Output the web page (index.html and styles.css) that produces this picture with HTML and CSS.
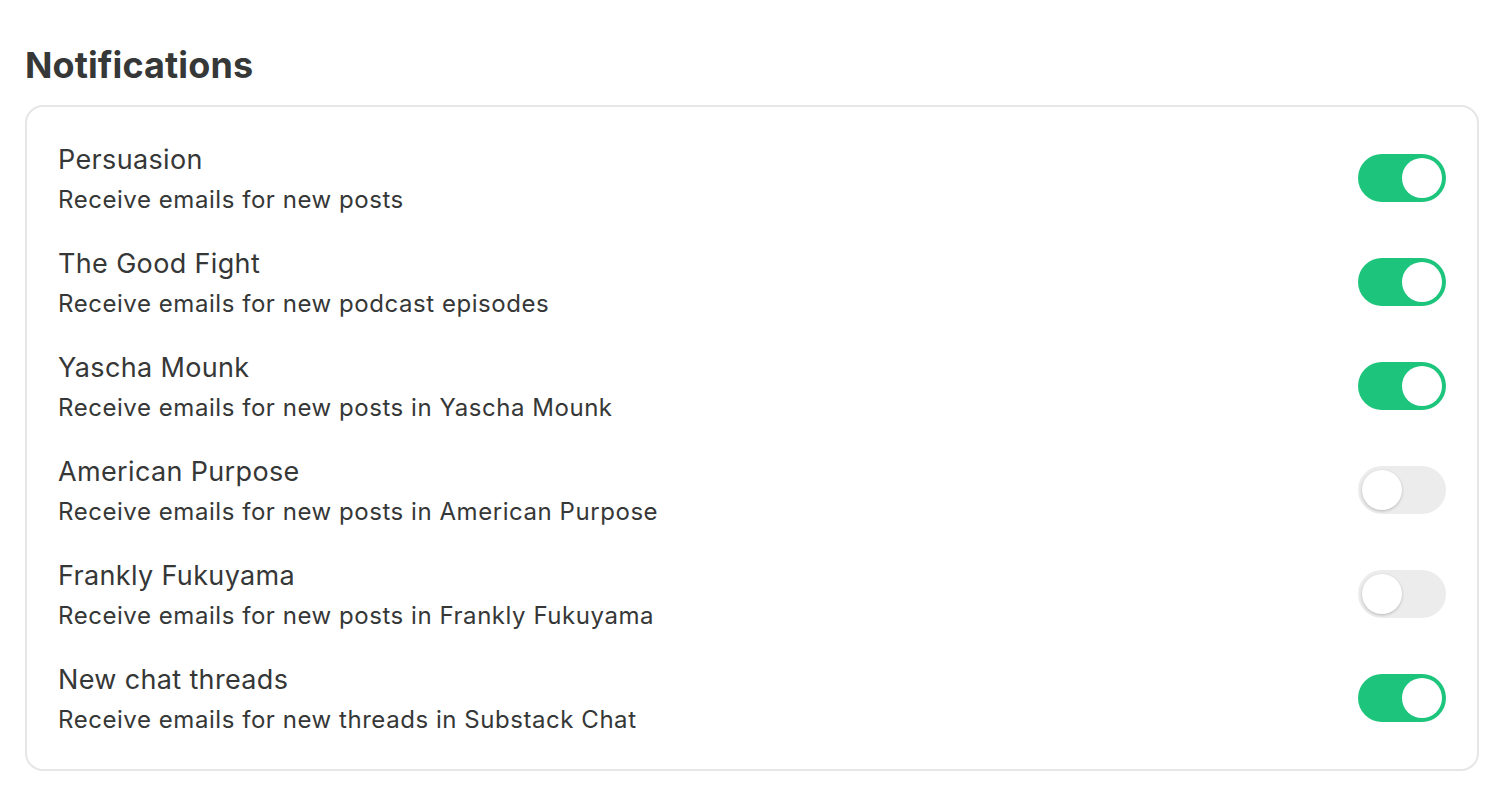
FILE: index.html
```html
<!DOCTYPE html>
<html>
<head>
<meta charset="utf-8">
<link rel="stylesheet" href="styles.css">
</head>
<body>
<main class="page">
  <h1 class="heading">Notifications</h1>
  <section class="card">
    <div class="row">
      <div class="text"><div class="title">Persuasion</div><div class="sub">Receive emails for new posts</div></div>
      <span class="toggle on"><span class="knob"></span></span>
    </div>
    <div class="row">
      <div class="text"><div class="title">The Good Fight</div><div class="sub">Receive emails for new podcast episodes</div></div>
      <span class="toggle on"><span class="knob"></span></span>
    </div>
    <div class="row">
      <div class="text"><div class="title">Yascha Mounk</div><div class="sub">Receive emails for new posts in Yascha Mounk</div></div>
      <span class="toggle on"><span class="knob"></span></span>
    </div>
    <div class="row">
      <div class="text"><div class="title">American Purpose</div><div class="sub">Receive emails for new posts in American Purpose</div></div>
      <span class="toggle off"><span class="knob"></span></span>
    </div>
    <div class="row">
      <div class="text"><div class="title">Frankly Fukuyama</div><div class="sub">Receive emails for new posts in Frankly Fukuyama</div></div>
      <span class="toggle off"><span class="knob"></span></span>
    </div>
    <div class="row">
      <div class="text"><div class="title">New chat threads</div><div class="sub">Receive emails for new threads in Substack Chat</div></div>
      <span class="toggle on"><span class="knob"></span></span>
    </div>
  </section>
</main>
</body>
</html>
```

FILE: styles.css
```css
html, body {
  margin: 0;
  padding: 0;
  background: #ffffff;
}
body {
  font-family: Inter, "Noto Sans", "Liberation Sans", sans-serif;
  color: #363737;
}
.page {
  padding: 42px 19px 0 25px;
}
.heading {
  margin: 0 0 17px 0;
  font-size: 36px;
  line-height: 46px;
  font-weight: 700;
  letter-spacing: 0.1px;
  color: #363737;
}
.card {
  border: 2px solid #e6e6e6;
  border-radius: 18px;
  padding: 19px 31px 19px 31px;
}
.row {
  height: 104px;
  display: flex;
  align-items: center;
  justify-content: space-between;
}
.text {
  display: flex;
  flex-direction: column;
  gap: 7px;
}
.title {
  font-size: 27px;
  line-height: 36px;
  letter-spacing: 0.35px;
}
.sub {
  font-size: 24px;
  line-height: 30px;
  letter-spacing: 0.55px;
}
.toggle {
  box-sizing: border-box;
  width: 88px;
  height: 48px;
  border-radius: 24px;
  padding: 4px;
  display: flex;
  align-items: center;
}
.toggle.on {
  background: #1dc57c;
  justify-content: flex-end;
}
.toggle.off {
  background: #ececec;
  justify-content: flex-start;
}
.knob {
  width: 40px;
  height: 40px;
  border-radius: 50%;
  background: #ffffff;
}
.toggle.off .knob {
  box-shadow: 0 1px 3px rgba(0, 0, 0, 0.22);
}
```
